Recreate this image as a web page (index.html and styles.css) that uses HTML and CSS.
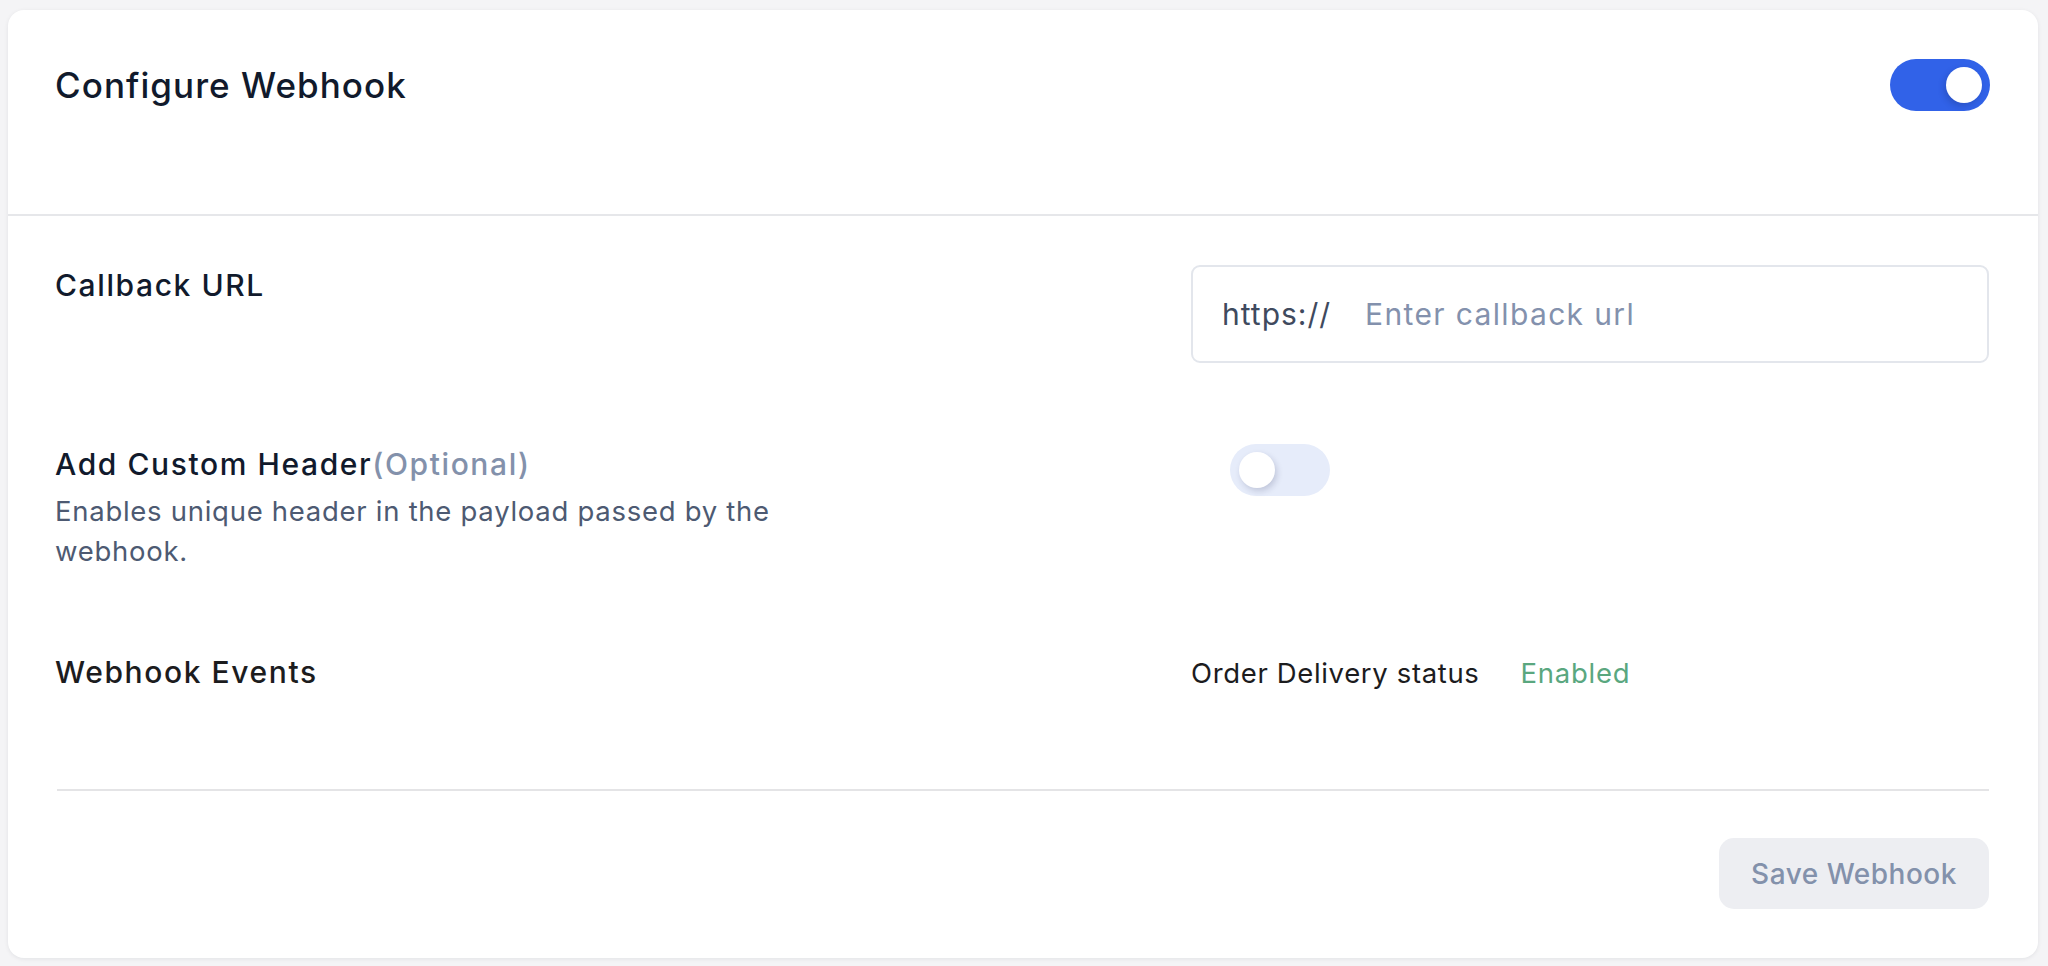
FILE: index.html
```html
<!DOCTYPE html>
<html lang="en">
<head>
<meta charset="utf-8">
<title>Configure Webhook</title>
<link rel="stylesheet" href="styles.css">
</head>
<body>
<div class="card">
  <header class="card-head">
    <h1 class="title">Configure Webhook</h1>
    <span class="toggle on"><span class="knob"></span></span>
  </header>
  <div class="card-body">
    <div class="row">
      <div class="label">Callback URL</div>
      <div class="field">
        <div class="url-input">
          <span class="prefix">https://</span>
          <input class="url-text" type="text" placeholder="Enter callback url">
        </div>
      </div>
    </div>
    <div class="row">
      <div class="label-block">
        <div class="label">Add Custom Header<span class="optional">(Optional)</span></div>
        <p class="desc">Enables unique header in the payload passed by the webhook.</p>
      </div>
      <div class="field">
        <span class="toggle off small-offset"><span class="knob"></span></span>
      </div>
    </div>
    <div class="row">
      <div class="label neutral">Webhook Events</div>
      <div class="field events">
        <span class="event-name">Order Delivery status</span>
        <span class="event-status">Enabled</span>
      </div>
    </div>
  </div>
  <footer class="card-foot">
    <button class="save-btn" type="button">Save Webhook</button>
  </footer>
</div>
</body>
</html>
```
FILE: styles.css
```css
* { box-sizing: border-box; }

html, body { height: 100%; }

body {
  margin: 0;
  padding: 10px 10px 8px 8px;
  background: #f4f4f6;
  font-family: Inter, "Noto Sans", sans-serif;
}

.card {
  background: #ffffff;
  border-radius: 16px;
  box-shadow: 0 1px 4px rgba(16, 24, 40, 0.08);
  height: 948px;
  display: flex;
  flex-direction: column;
}

.card-head {
  height: 206px;
  padding: 49px 48px 0 47px;
  border-bottom: 2px solid #e6e7ea;
  display: flex;
  justify-content: space-between;
  align-items: flex-start;
}

.title {
  margin: 0;
  font-size: 35px;
  font-weight: 500;
  color: #111a2c;
  line-height: 52px;
  letter-spacing: 1.05px;
}

.toggle {
  width: 100px;
  height: 52px;
  border-radius: 26px;
  display: flex;
  align-items: center;
  padding: 0 8px;
  flex-shrink: 0;
}

.toggle.on {
  background: #3162e8;
  justify-content: flex-end;
}

.toggle.off {
  background: #e6ecfa;
  justify-content: flex-start;
  padding-left: 9px;
}

.knob {
  width: 36px;
  height: 36px;
  border-radius: 50%;
  background: #ffffff;
  box-shadow: -2px 3px 6px rgba(20, 30, 80, 0.22);
}

.toggle.off .knob {
  box-shadow: 2px 3px 6px rgba(20, 30, 80, 0.18);
}

.card-body {
  padding: 49px 49px 99px 47px;
  display: flex;
  flex-direction: column;
  gap: 81px;
}

.row {
  display: grid;
  grid-template-columns: 1fr 798px;
  align-items: start;
}

.label {
  font-size: 30px;
  font-weight: 500;
  color: #111a2c;
  letter-spacing: 1.6px;
  padding-top: 2px;
}

.label.neutral {
  color: #1c1c1e;
}

.optional {
  color: #8391ab;
  font-weight: 500;
}

.desc {
  margin: 9px 0 0;
  max-width: 780px;
  font-size: 27.5px;
  line-height: 40px;
  color: #4d5a72;
  letter-spacing: 0.72px;
}

.url-input {
  height: 98px;
  border: 2px solid #e3e6ec;
  border-radius: 9px;
  display: flex;
  align-items: center;
  padding-left: 29px;
  gap: 34px;
}

.prefix {
  font-size: 30px;
  color: #3f4a5e;
  letter-spacing: 1px;
}

.url-text {
  flex: 1;
  border: 0;
  outline: none;
  padding: 0;
  font-family: inherit;
  font-size: 30px;
  color: #3f4a5e;
  letter-spacing: 1.35px;
  background: transparent;
}

.url-text::placeholder {
  color: #8391ad;
}

.small-offset {
  margin-left: 39px;
}

.events {
  display: flex;
  align-items: baseline;
  gap: 41px;
  padding-top: 4px;
}

.event-name {
  font-size: 27.5px;
  color: #1c1c1e;
  letter-spacing: 0.65px;
}

.event-status {
  font-size: 27.5px;
  color: #5aa77f;
  letter-spacing: 0.75px;
}

.card-foot {
  margin: 0 49px;
  border-top: 2px solid #e4e4e6;
  padding: 47px 0 0;
  display: flex;
  justify-content: flex-end;
}

.save-btn {
  width: 270px;
  height: 71px;
  border: 0;
  border-radius: 15px;
  background: #edeef2;
  color: #8391ab;
  font-family: inherit;
  font-size: 28px;
  font-weight: 500;
  letter-spacing: 0.5px;
  cursor: default;
}
```
